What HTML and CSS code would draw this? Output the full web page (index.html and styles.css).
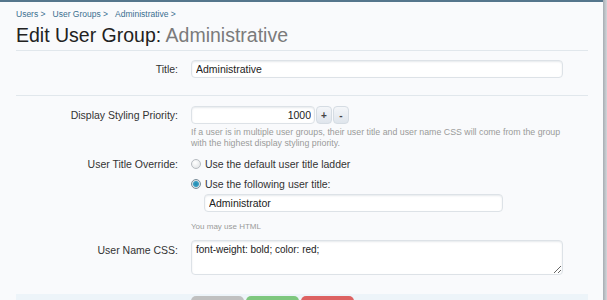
FILE: index.html
```html
<!DOCTYPE html>
<html lang="en">

<head>
    <meta charset="UTF-8">
    <title>Edit User Group: Administrative</title>
    <link rel="stylesheet" href="styles.css">
</head>

<body>
    <div class="contain">
        <nav class="crumbs">
            <a href="#">Users &gt;</a>
            <a href="#">User Groups &gt;</a>
            <a href="#">Administrative &gt;</a>
        </nav>

        <h1 class="title-bar">Edit User Group: <span class="muted">Administrative</span></h1>

        <form class="edit-form">
            <div class="ctrl-unit sep">
                <label class="ctrl-label" for="title">Title:</label>
                <div class="ctrl">
                    <input type="text" id="title" class="text-ctrl wide" value="Administrative">
                </div>
            </div>

            <div class="ctrl-unit">
                <label class="ctrl-label" for="priority">Display Styling Priority:</label>
                <div class="ctrl">
                    <div class="spin">
                        <input type="text" id="priority" class="text-ctrl number" value="1000">
                        <button type="button" class="spin-btn">+</button>
                        <button type="button" class="spin-btn">-</button>
                    </div>
                    <p class="explain long">If a user is in multiple user groups, their user title and user name CSS will come from the group<br>with the highest display styling priority.</p>
                </div>
            </div>

            <div class="ctrl-unit tight">
                <span class="ctrl-label tall">User Title Override:</span>
                <div class="ctrl">
                    <div class="option"><span class="radio"></span>Use the default user title ladder</div>
                    <div class="option"><span class="radio checked"></span>Use the following user title:</div>
                    <input type="text" class="text-ctrl sub" value="Administrator">
                    <p class="explain hint">You may use HTML</p>
                </div>
            </div>

            <div class="ctrl-unit last">
                <label class="ctrl-label css-label" for="css">User Name CSS:</label>
                <div class="ctrl">
                    <textarea id="css" class="text-ctrl area">font-weight: bold; color: red;</textarea>
                </div>
            </div>

            <div class="submit-bar">
                <span class="btn grey"></span>
                <span class="btn green"></span>
                <span class="btn red"></span>
            </div>
        </form>
    </div>
</body>

</html>
```

FILE: styles.css
```css
* {
    box-sizing: border-box;
}

html {
    overflow: hidden;
    background: linear-gradient(to right, #f9fafc 603px, #a7adb3 603px, #d3d6da 607px);
}

body {
    margin: 0 4px 0 0;
    border-top: 2px solid #55768c;
    font-family: "Liberation Sans", Arial, sans-serif;
    color: #333;
}

.contain {
    margin-left: 16px;
    width: 572px;
}

.crumbs {
    display: flex;
    gap: 7px;
    padding-top: 6px;
    font-size: 8.5px;
    line-height: 12px;
}

.crumbs a {
    color: #3a6f90;
    text-decoration: none;
}

.title-bar {
    margin: 3px 0 0;
    padding-bottom: 3px;
    font-size: 19.5px;
    line-height: 24px;
    font-weight: normal;
    color: #222;
    border-bottom: 1px solid #e1e7ec;
}

.title-bar .muted {
    color: #7b7b7b;
}

.edit-form {
    margin: 0;
}

.ctrl-unit {
    display: grid;
    grid-template-columns: 162px 372px;
    column-gap: 13px;
    padding: 10px 0 0;
}

.ctrl-unit.sep {
    padding: 9px 0 17px;
    border-bottom: 1px solid #e1e7ec;
}

.ctrl-unit.tight {
    padding-top: 5px;
}

.ctrl-unit.last {
    padding-top: 8px;
}

.ctrl-label {
    text-align: right;
    font-size: 10.5px;
    line-height: 18px;
    color: #333;
}

.ctrl-label.tall {
    line-height: 20px;
}

.css-label {
    padding-top: 1px;
}

.text-ctrl {
    display: block;
    height: 18px;
    padding: 0 4px;
    font-family: "Liberation Sans", Arial, sans-serif;
    font-size: 10.5px;
    color: #222;
    background: #fff;
    border: 1px solid #dde2e7;
    border-radius: 4px;
    box-shadow: inset 0 1px 2px #e6e9ec;
    outline: none;
}

.wide {
    width: 372px;
}

.spin {
    display: flex;
    align-items: center;
    gap: 1px;
}

.number {
    width: 124px;
    padding-right: 3px;
    text-align: right;
}

.spin-btn {
    width: 16px;
    height: 18px;
    padding: 0;
    font-family: "Liberation Sans", Arial, sans-serif;
    font-size: 10px;
    font-weight: bold;
    color: #444;
    background: linear-gradient(#f4f6f9, #dfe5ec);
    border: 1px solid #d5dce3;
    border-radius: 4px;
}

.explain {
    margin: 3px 0 0;
    font-size: 8px;
    line-height: 11px;
    color: #9a9a9a;
}

.explain.long {
    font-size: 8.8px;
}

.option {
    display: flex;
    align-items: center;
    height: 20px;
    font-size: 10.5px;
    color: #333;
}

.radio {
    width: 10px;
    height: 10px;
    margin-right: 4px;
    border: 1px solid #b7bcc1;
    border-radius: 50%;
    background: radial-gradient(circle at 40% 35%, #ffffff, #dcdfe2);
}

.radio.checked {
    border-color: #7a8d99;
    background: radial-gradient(circle at 50% 50%, #1f86ad 0, #3aa0c4 2.5px, #d9dee2 3.5px, #f4f5f6 5px);
}

.sub {
    width: 299px;
    margin-left: 13px;
}

.hint {
    margin-top: 9px;
}

.area {
    width: 372px;
    height: 35px;
    padding: 3px 4px;
    font-size: 10px;
    line-height: 12px;
    resize: vertical;
}

.submit-bar {
    display: flex;
    gap: 2px;
    margin-top: 19px;
    padding: 2px 0 0 175px;
    height: 30px;
    background: #edf4f9;
}

.btn {
    width: 53px;
    height: 24px;
    border-radius: 5px 5px 0 0;
}

.grey {
    background: #c0c0c0;
}

.green {
    background: #7ec77e;
}

.red {
    background: #dd6262;
}
```
